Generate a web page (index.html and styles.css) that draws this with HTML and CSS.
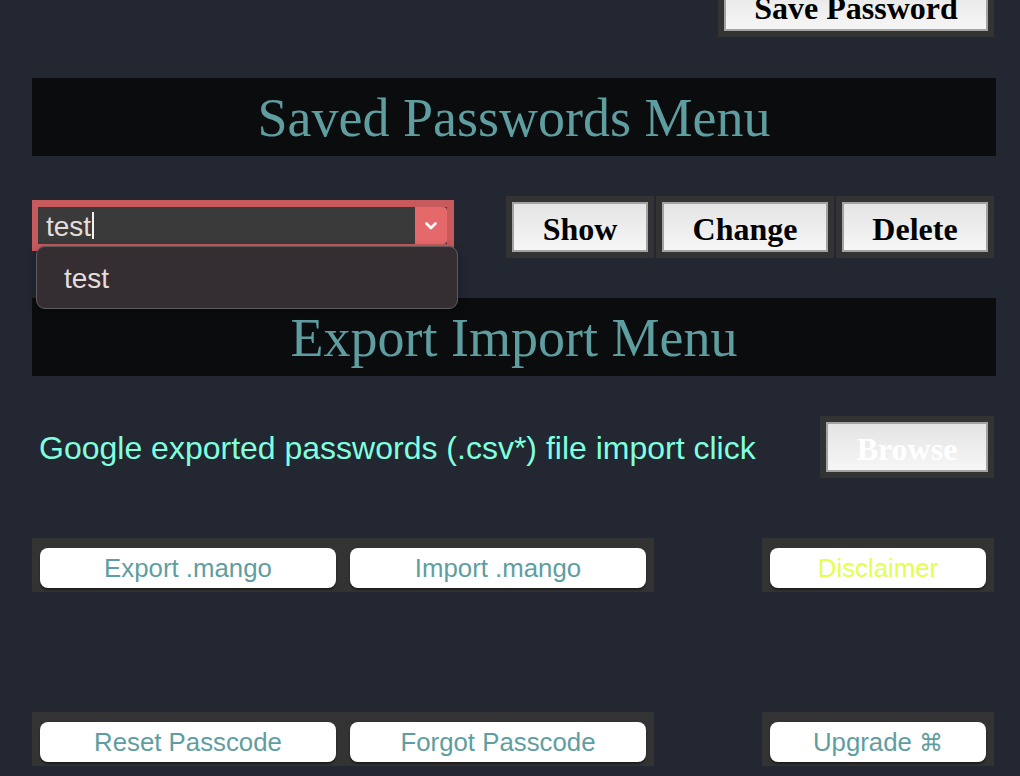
FILE: index.html
```html
<!DOCTYPE html>
<html>
<head>
<meta charset="utf-8">
<link rel="stylesheet" href="styles.css">
</head>
<body>
<div class="page">
  <div class="row row-top">
    <div class="frame"><button class="btn-classic btn-save">Save Password</button></div>
  </div>

  <h1 class="menu-title">Saved Passwords Menu</h1>

  <div class="row row-select">
    <div class="combo">
      <div class="field">
        <span class="field-text">test</span><span class="caret"></span>
        <span class="arrow"><svg width="14" height="10" viewBox="0 0 14 10"><path d="M2.5 2.5 L7 7 L11.5 2.5" fill="none" stroke="#fff" stroke-width="2.6" stroke-linecap="round" stroke-linejoin="round"/></svg></span>
      </div>
      <div class="dropdown"><span class="option">test</span></div>
    </div>
    <div class="actions">
      <div class="frame"><button class="btn-classic btn-show">Show</button></div>
      <div class="frame"><button class="btn-classic btn-change">Change</button></div>
      <div class="frame"><button class="btn-classic btn-delete">Delete</button></div>
    </div>
  </div>

  <h1 class="menu-title">Export Import Menu</h1>

  <div class="row row-google">
    <span class="google-text">Google exported passwords (.csv*) file import click</span>
    <div class="frame"><button class="btn-classic btn-browse">Browse</button></div>
  </div>

  <div class="row row-pills row-first">
    <div class="pill-frame pill-pair">
      <button class="pill">Export .mango</button>
      <button class="pill">Import .mango</button>
    </div>
    <div class="pill-frame pill-single">
      <button class="pill pill-yellow">Disclaimer</button>
    </div>
  </div>

  <div class="row row-pills row-second">
    <div class="pill-frame pill-pair">
      <button class="pill">Reset Passcode</button>
      <button class="pill">Forgot Passcode</button>
    </div>
    <div class="pill-frame pill-single">
      <button class="pill">Upgrade <span class="cmd">⌘</span></button>
    </div>
  </div>
</div>
</body>
</html>
```

FILE: styles.css
```css
html, body {
  margin: 0;
  padding: 0;
  background: #222732;
  overflow: hidden;
}

.page {
  width: 964px;
  margin-left: 32px;
  display: flex;
  flex-direction: column;
}

.row {
  display: flex;
  align-items: center;
}

.row-top {
  justify-content: flex-end;
  margin-top: -25px;
  padding-right: 2px;
}

.frame {
  background: #333333;
  padding: 6px;
  display: flex;
}

.btn-classic {
  height: 50px;
  margin: 0;
  padding: 0;
  border: 2px solid #a3a3a3;
  background: linear-gradient(#e4e4e4, #f6f6f6);
  font-family: "Liberation Serif", "Times New Roman", serif;
  font-weight: bold;
  font-size: 32px;
  color: #000;
  line-height: 1;
  padding-top: 4px;
}

.btn-save { width: 264px; }
.btn-show { width: 136px; }
.btn-change { width: 166px; }
.btn-delete { width: 146px; }
.btn-browse { width: 162px; color: #ffffff; }

.menu-title {
  margin: 0;
  height: 78px;
  background: #0b0c0e;
  color: #5f9ea0;
  font-family: "Liberation Serif", "Times New Roman", serif;
  font-weight: normal;
  font-size: 54px;
  line-height: 80px;
  text-align: center;
}

.page > .menu-title:nth-of-type(1) { margin-top: 41px; }

.row-select {
  margin-top: 40px;
  height: 62px;
  justify-content: space-between;
  align-items: flex-start;
  padding-right: 2px;
}

.row-select + .menu-title { margin-top: 40px; }

.combo {
  position: relative;
  margin-top: 4px;
  width: 409px;
  padding: 7px 7px 7px 6px;
  background: #c65a5c;
}

.field {
  height: 37px;
  background: #3a3a3a;
  display: flex;
  align-items: center;
  position: relative;
}

.field-text {
  margin-left: 8px;
  font-family: "Liberation Sans", Arial, sans-serif;
  font-size: 28px;
  color: #e2dede;
  line-height: 1;
  margin-top: 2px;
}

.caret {
  width: 2px;
  height: 27px;
  background: #f2f2f2;
  margin-left: 1px;
}

.arrow {
  margin-left: auto;
  width: 32px;
  height: 37px;
  background: #e5686a;
  border-radius: 0 4px 4px 0;
  display: flex;
  align-items: center;
  justify-content: center;
}

.dropdown {
  position: absolute;
  left: 4px;
  top: 46px;
  width: 420px;
  height: 61px;
  background: #342e33;
  border: 1px solid #5f5b5f;
  border-radius: 9px;
  box-shadow: 0 3px 8px rgba(0, 0, 0, 0.35);
  display: flex;
  align-items: center;
  z-index: 2;
}

.option {
  margin-left: 27px;
  margin-top: 2px;
  font-family: "Liberation Sans", Arial, sans-serif;
  font-size: 28px;
  color: #e2dede;
}

.actions {
  display: flex;
  gap: 2px;
}

.row-google {
  margin-top: 40px;
  height: 62px;
  justify-content: space-between;
  padding-right: 2px;
}

.google-text {
  margin-left: 7px;
  font-family: "Liberation Sans", Arial, sans-serif;
  font-size: 32px;
  color: #80ffdf;
  margin-top: 2px;
}

.row-pills {
  justify-content: space-between;
  padding-right: 2px;
}

.row-first { margin-top: 60px; }
.row-second { margin-top: 120px; }

.pill-frame {
  background: #333333;
  padding: 10px 8px 4px 8px;
  display: flex;
  gap: 14px;
}

.pill-pair { width: 606px; }
.pill-single { width: 216px; }

.pill {
  flex: 1;
  height: 40px;
  margin: 0;
  padding: 0;
  border: none;
  border-radius: 8px;
  background: #ffffff;
  box-shadow: 0 2px 2px rgba(0, 0, 0, 0.45);
  font-family: "Liberation Sans", Arial, sans-serif;
  font-size: 25.8px;
  color: #5f9ea0;
  line-height: 38px;
}

.pill-yellow { color: #e3ff4c; }

.cmd {
  font-family: "DejaVu Sans", sans-serif;
  font-size: 24px;
}
```
